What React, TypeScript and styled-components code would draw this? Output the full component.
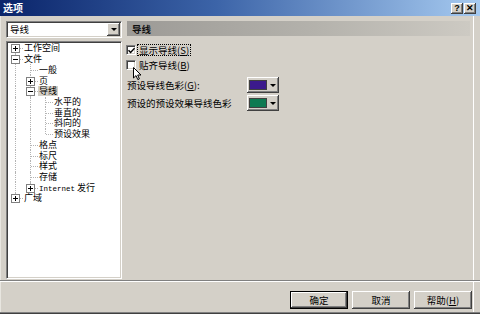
import React from 'react';
import styled, { createGlobalStyle } from 'styled-components';

const CJK = `"Noto Sans CJK SC", "Noto Sans", sans-serif`;

const Global = createGlobalStyle`
  html, body { margin: 0; padding: 0; background: #d4d0c8; }
  body { width: 480px; height: 314px; overflow: hidden; font-family: ${CJK}; }
  * { box-sizing: border-box; }
`;

const Window = styled.div`
  width: 480px;
  height: 314px;
  display: flex;
  flex-direction: column;
  background: #d4d0c8;
  box-shadow: inset 0 -1px #404040, inset 0 -2px #808080, inset 1px 0 #e8e6e0, inset -6px 0 #d4d0c8, inset -7px 0 #fff;
`;

const TitleBar = styled.div`
  height: 16px;
  flex: none;
  display: flex;
  align-items: center;
  padding: 0 4px 0 3px;
  background: linear-gradient(to right, #0a246a, #3c64a8 45%, #a6caf0);
`;

const Title = styled.span`
  flex: 1;
  color: #fff;
  font: bold 10px ${CJK};
  line-height: 16px;
`;

const CapButton = styled.div`
  width: 12px;
  height: 11px;
  margin-left: 1px;
  background: #d4d0c8;
  box-shadow: inset -1px -1px #404040, inset 1px 1px #fff, inset -2px -2px #808080;
  display: flex;
  align-items: center;
  justify-content: center;
  font: bold 9px "Liberation Sans", sans-serif;
  color: #000;
  line-height: 1;
`;

const Body = styled.div`
  flex: 1;
  min-height: 0;
  display: flex;
  gap: 4px;
  padding: 5px 10px 1px 6px;
`;

const LeftCol = styled.div`
  width: 116px;
  flex: none;
  display: flex;
  flex-direction: column;
  gap: 3px;
`;

const sunken = `
  border: 1px solid;
  border-color: #808080 #fff #fff #808080;
  box-shadow: inset 1px 1px #404040, inset -1px -1px #d4d0c8;
`;

const Combo = styled.div`
  height: 17px;
  flex: none;
  ${sunken}
  background: #fff;
  display: flex;
  align-items: center;
  padding: 1px 1px 1px 3px;
  font: 9.5px ${CJK};
  color: #000;
`;

const ComboText = styled.span`
  flex: 1;
  line-height: 13px;
`;

const ArrowButton = styled.div`
  width: 13px;
  height: 13px;
  background: #d4d0c8;
  box-shadow: inset -1px -1px #404040, inset 1px 1px #fff, inset -2px -2px #808080;
  display: flex;
  align-items: center;
  justify-content: center;
`;

const Triangle = styled.span`
  width: 0;
  height: 0;
  border-left: 3px solid transparent;
  border-right: 3px solid transparent;
  border-top: 3px solid #000;
`;

const Tree = styled.div`
  flex: 1;
  ${sunken}
  background: #fff;
  padding: 1px 1px;
  overflow: hidden;
`;

const Row = styled.div`
  display: flex;
  align-items: center;
  height: 10.72px;
`;

const Guide = styled.div<{ $up: boolean; $down: boolean; $h: boolean }>`
  width: 15px;
  height: 100%;
  flex: none;
  position: relative;
  &::before {
    content: '';
    position: absolute;
    left: 7px;
    top: ${p => (p.$up ? '0' : '50%')};
    bottom: ${p => (p.$down ? '0' : '50%')};
    border-left: 1px dotted #b4b4b4;
    display: ${p => (p.$up || p.$down ? 'block' : 'none')};
  }
  &::after {
    content: '';
    position: absolute;
    left: 8px;
    right: 0;
    top: 50%;
    border-top: 1px dotted #b4b4b4;
    display: ${p => (p.$h ? 'block' : 'none')};
  }
`;

const Expander = styled.span<{ $open: boolean }>`
  position: absolute;
  z-index: 1;
  left: 3px;
  top: calc(50% - 4px);
  width: 9px;
  height: 9px;
  background: #fff;
  border: 1px solid #808080;
  &::before {
    content: '';
    position: absolute;
    left: 1px;
    top: 3px;
    width: 5px;
    height: 1px;
    background: #000;
  }
  &::after {
    content: '';
    position: absolute;
    left: 3px;
    top: 1px;
    width: 1px;
    height: 5px;
    background: #000;
    display: ${p => (p.$open ? 'none' : 'block')};
  }
`;

const NodeLabel = styled.span<{ $selected?: boolean }>`
  padding: 0 1px;
  font: 9px ${CJK};
  line-height: 10px;
  color: #000;
  white-space: nowrap;
  background: ${p => (p.$selected ? '#d4d0c8' : 'transparent')};
`;

const Mono = styled.span`
  font: 7.5px "Liberation Mono", monospace;
`;

const RightCol = styled.div`
  flex: 1;
  display: flex;
  flex-direction: column;
  position: relative;
`;

const Header = styled.div`
  height: 15px;
  margin-left: 1px;
  flex: none;
  display: flex;
  align-items: center;
  padding-left: 5px;
  background: linear-gradient(to right, #9c9a96, #b4b2ac 55%, #cdcac3);
  font: bold 9.5px ${CJK};
  color: #111;
`;

const Checks = styled.div`
  display: flex;
  flex-direction: column;
  gap: 5px;
  margin-top: 9px;
`;

const CheckRow = styled.label`
  display: flex;
  align-items: center;
  height: 10px;
  gap: 2px;
`;

const CheckBox = styled.span`
  width: 10px;
  height: 10px;
  flex: none;
  background: #fff;
  ${sunken}
  display: flex;
  align-items: center;
  justify-content: center;
`;

const Text = styled.span<{ $focus?: boolean }>`
  font: 9.5px ${CJK};
  line-height: 10px;
  color: #000;
  padding: 0 1px;
  white-space: nowrap;
  outline: ${p => (p.$focus ? '1px dotted #000' : 'none')};
`;

const Key = styled.span`
  text-decoration: underline;
`;

const ColorGrid = styled.div`
  display: grid;
  grid-template-columns: 121px auto;
  grid-auto-rows: 16px;
  row-gap: 2px;
  align-items: center;
  justify-items: start;
  margin-top: 7px;
`;

const ColorButton = styled.div`
  width: 32px;
  height: 16px;
  background: #d4d0c8;
  box-shadow: inset -1px -1px #404040, inset 1px 1px #fff, inset -2px -2px #808080;
  display: flex;
  align-items: center;
  gap: 3px;
  padding: 0 3px 0 2px;
`;

const Swatch = styled.span<{ $color: string }>`
  width: 19px;
  height: 10px;
  background: ${p => p.$color};
  border: 1px solid #404040;
`;

const Cursor = styled.svg`
  position: absolute;
  left: 7px;
  top: 46px;
`;

const Separator = styled.div`
  height: 2px;
  flex: none;
  border-top: 1px solid #808080;
  border-bottom: 1px solid #fff;
`;

const Footer = styled.div`
  height: 32px;
  flex: none;
  display: flex;
  justify-content: flex-end;
  align-items: flex-start;
  gap: 4px;
  padding: 9px 8px 0 0;
`;

const Button = styled.div<{ $default?: boolean }>`
  width: 58px;
  height: 18px;
  background: #d4d0c8;
  display: flex;
  align-items: center;
  justify-content: center;
  font: 9.5px ${CJK};
  color: #000;
  border: ${p => (p.$default ? '1px solid #000' : 'none')};
  box-shadow: inset -1px -1px #404040, inset 1px 1px #fff, inset -2px -2px #808080;
`;

type TNode = {
  label: React.ReactNode;
  children?: TNode[];
  open?: boolean;
  selected?: boolean;
};

const tree: TNode[] = [
  { label: '工作空间', children: [{ label: '' }] },
  {
    label: '文件',
    open: true,
    children: [
      { label: '一般' },
      { label: '页', children: [{ label: '' }] },
      {
        label: '导线',
        open: true,
        selected: true,
        children: [{ label: '水平的' }, { label: '垂直的' }, { label: '斜向的' }, { label: '预设效果' }],
      },
      { label: '格点' },
      { label: '标尺' },
      { label: '样式' },
      { label: '存储' },
      {
        label: (
          <>
            <Mono>Internet</Mono> 发行
          </>
        ),
        children: [{ label: '' }],
      },
    ],
  },
  { label: '广域', children: [{ label: '' }] },
];

type Flat = { node: TNode; trail: boolean[]; hasNext: boolean; isFirstRoot: boolean };

function flatten(nodes: TNode[], trail: boolean[], out: Flat[], root: boolean) {
  nodes.forEach((n, i) => {
    const hasNext = i < nodes.length - 1;
    out.push({ node: n, trail, hasNext, isFirstRoot: root && i === 0 });
    if (n.children && n.open) flatten(n.children, [...trail, hasNext], out, false);
  });
  return out;
}

const rows = flatten(tree, [], [], true);

function TreeView() {
  return (
    <Tree>
      {rows.map((r, idx) => (
        <Row key={idx}>
          {r.trail.map((cont, j) => (
            <Guide key={j} $up={cont} $down={cont} $h={false} />
          ))}
          <Guide $up={!r.isFirstRoot} $down={r.hasNext} $h>
            {r.node.children && <Expander $open={!!r.node.open} />}
          </Guide>
          <NodeLabel $selected={r.node.selected}>{r.node.label}</NodeLabel>
        </Row>
      ))}
    </Tree>
  );
}

export default function App() {
  return (
    <>
      <Global />
      <Window>
        <TitleBar>
          <Title>选项</Title>
          <CapButton>?</CapButton>
          <CapButton>✕</CapButton>
        </TitleBar>
        <Body>
          <LeftCol>
            <Combo>
              <ComboText>导线</ComboText>
              <ArrowButton>
                <Triangle />
              </ArrowButton>
            </Combo>
            <TreeView />
          </LeftCol>
          <RightCol>
            <Header>导线</Header>
            <Checks>
              <CheckRow>
                <CheckBox>
                  <svg width="7" height="7" viewBox="0 0 7 7">
                    <path d="M0.5 3.2 L2.6 5.4 L6.6 1.2" stroke="#000" strokeWidth="1.5" fill="none" />
                  </svg>
                </CheckBox>
                <Text $focus>
                  显示导线(<Key>S</Key>)
                </Text>
              </CheckRow>
              <CheckRow>
                <CheckBox />
                <Text>
                  贴齐导线(<Key>B</Key>)
                </Text>
              </CheckRow>
            </Checks>
            <ColorGrid>
              <Text>
                预设导线色彩(<Key>G</Key>):
              </Text>
              <ColorButton>
                <Swatch $color="#3b1a8c" />
                <Triangle />
              </ColorButton>
              <Text>预设的预设效果导线色彩</Text>
              <ColorButton>
                <Swatch $color="#0e7a52" />
                <Triangle />
              </ColorButton>
            </ColorGrid>
            <Cursor width="10" height="14" viewBox="0 0 10 14">
              <path d="M0.5 0.5 L0.5 11 L3 8.6 L4.8 12.6 L6.4 11.9 L4.7 8 L8 8 Z" fill="#fff" stroke="#000" strokeWidth="1" />
            </Cursor>
          </RightCol>
        </Body>
        <Separator />
        <Footer>
          <Button $default>确定</Button>
          <Button>取消</Button>
          <Button>
            帮助(<Key>H</Key>)
          </Button>
        </Footer>
      </Window>
    </>
  );
}
